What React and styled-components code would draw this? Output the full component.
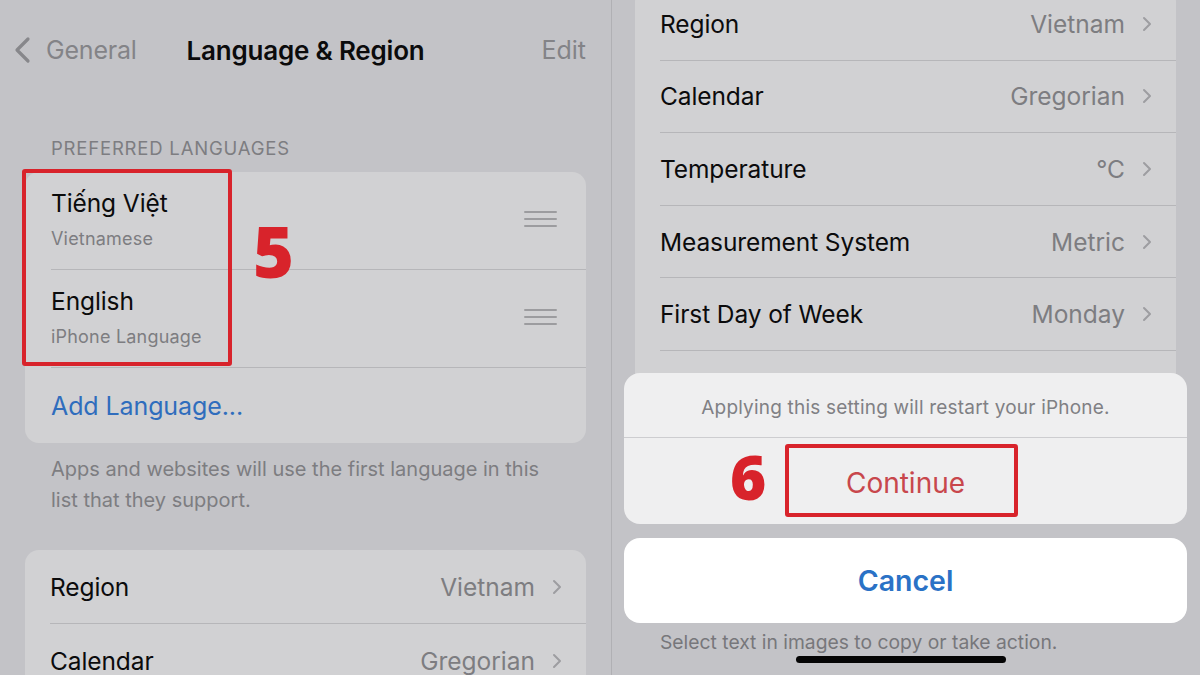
import React from "react";
import styled, { createGlobalStyle } from "styled-components";

const Global = createGlobalStyle`
  html, body { margin: 0; padding: 0; background: #c3c3c7; }
  body { font-family: Inter, "Noto Sans", Roboto, sans-serif; -webkit-font-smoothing: antialiased; }
  * { box-sizing: border-box; }
`;

const Screen = styled.div`
  width: 1200px;
  height: 675px;
  display: flex;
  overflow: hidden;
  background: #c3c3c7;
`;

const Panel = styled.div`
  position: relative;
  width: ${(p) => p.$w || "auto"};
  flex: ${(p) => (p.$w ? "none" : "1")};
  height: 100%;
  display: flex;
  flex-direction: column;
  overflow: hidden;
  border-left: ${(p) => (p.$divider ? "1px solid #b0b0b4" : "none")};
  & > * { flex-shrink: 0; }
`;

const NavBar = styled.div`
  height: 100px;
  display: grid;
  grid-template-columns: 1fr auto 1fr;
  align-items: center;
  padding: 0 25px;
`;

const BackBtn = styled.div`
  display: flex;
  align-items: center;
  gap: 13px;
  margin-left: -12px;
  color: #838387;
  font-size: 25px;
  letter-spacing: -0.2px;
`;

const Title = styled.div`
  font-size: 26px;
  font-weight: 600;
  color: #0b0b0c;
  letter-spacing: -0.2px;
`;

const NavRight = styled.div`
  justify-self: end;
  font-size: 25px;
  color: #838387;
`;

const SectionHeader = styled.div`
  padding: 37px 51px 0;
  height: 72px;
  font-size: 18.5px;
  color: #7d7d81;
  letter-spacing: 0.8px;
`;

const Card = styled.div`
  margin: ${(p) => p.$margin || "0 25px"};
  background: #d1d1d3;
  border-radius: 14px;
  overflow: hidden;
`;

const LangRow = styled.div`
  height: ${(p) => p.$h || 98}px;
  margin-left: 26px;
  padding-right: 29px;
  display: flex;
  align-items: center;
  justify-content: space-between;
  border-bottom: ${(p) => (p.$last ? "none" : "1px solid #b6b6b9")};
`;

const LangText = styled.div`
  display: flex;
  flex-direction: column;
  gap: 10px;
  margin-top: -4px;
`;

const Primary = styled.div`
  font-size: 24.5px;
  color: #0b0b0c;
  letter-spacing: -0.1px;
`;

const Secondary = styled.div`
  font-size: 18px;
  color: #7d7d81;
  letter-spacing: 0.2px;
`;

const LinkText = styled.div`
  font-size: 25px;
  color: #2f6dbd;
  letter-spacing: -0.1px;
`;

const Handle = styled.div`
  width: 33px;
  display: flex;
  flex-direction: column;
  gap: 5px;
  margin-top: -4px;
  & > span {
    display: block;
    height: 2px;
    background: #9c9c9f;
    border-radius: 1px;
  }
`;

const FooterNote = styled.div`
  padding: 11px 60px 0 51px;
  height: 107px;
  font-size: 20px;
  line-height: 31px;
  color: #7d7d81;
`;

const SettingRow = styled.div`
  height: ${(p) => p.$h}px;
  margin-left: 25px;
  padding-right: 24px;
  display: flex;
  align-items: center;
  justify-content: space-between;
  border-bottom: 1px solid #b6b6b9;
  flex: none;
`;

const Value = styled.div`
  display: flex;
  align-items: center;
  gap: 17px;
  font-size: 24.5px;
  color: #7d7d81;
`;

const Overlay = styled.div`
  position: absolute;
  left: 12px;
  right: 13px;
  top: 373px;
  display: flex;
  flex-direction: column;
  align-items: stretch;
`;

const Sheet = styled.div`
  background: #efeff0;
  border-radius: 16px;
  overflow: hidden;
`;

const SheetMessage = styled.div`
  height: 65px;
  display: flex;
  align-items: center;
  justify-content: center;
  font-size: 19px;
  letter-spacing: 0.2px;
  color: #808084;
  border-bottom: 1px solid #cdcdd0;
  padding-top: 4px;
`;

const SheetAction = styled.div`
  height: 86px;
  display: flex;
  align-items: center;
  justify-content: center;
  font-size: 28px;
  padding-top: 3px;
  color: ${(p) => p.$color};
  font-weight: ${(p) => p.$weight || 400};
`;

const CancelBtn = styled(SheetAction)`
  margin-top: 14px;
  height: 85px;
  padding-top: 0;
  background: #ffffff;
  border-radius: 16px;
  font-size: 28.5px;
`;

const Hint = styled.div`
  margin-top: 7px;
  padding-left: 36px;
  font-size: 19.3px;
  color: #77777b;
  height: 23px;
`;

const HomeBar = styled.div`
  align-self: center;
  margin-top: 3px;
  width: 210px;
  height: 7px;
  border-radius: 4px;
  background: #050505;
  transform: translateX(-5px);
`;

const RedBox = styled.div`
  position: absolute;
  left: ${(p) => p.$x}px;
  top: ${(p) => p.$y}px;
  width: ${(p) => p.$w}px;
  height: ${(p) => p.$h}px;
  border: 4px solid #d8232b;
  border-radius: 3px;
  pointer-events: none;
`;

const RedNumber = styled.div`
  position: absolute;
  left: ${(p) => p.$x}px;
  top: ${(p) => p.$y}px;
  font-family: "Open Sans", "DejaVu Sans", sans-serif;
  font-weight: 800;
  font-size: ${(p) => p.$size}px;
  line-height: 1;
  color: #d8232b;
`;

const Chevron = () => (
  <svg width="10" height="16" viewBox="0 0 10 16" fill="none">
    <path d="M2 2l6 6-6 6" stroke="#9d9da1" strokeWidth="2" strokeLinecap="round" strokeLinejoin="round" />
  </svg>
);

const BackChevron = () => (
  <svg width="20" height="28" viewBox="0 0 20 28" fill="none">
    <path d="M15 3L4 14l11 11" stroke="#87878b" strokeWidth="3.2" strokeLinecap="round" strokeLinejoin="round" />
  </svg>
);

const DragHandle = () => (
  <Handle>
    <span />
    <span />
    <span />
  </Handle>
);

const rightRows = [
  ["Region", "Vietnam"],
  ["Calendar", "Gregorian"],
  ["Temperature", "°C"],
  ["Measurement System", "Metric"],
  ["First Day of Week", "Monday"],
];

export default function App() {
  return (
    <>
      <Global />
      <Screen>
        <Panel $w="611px">
          <NavBar>
            <BackBtn>
              <BackChevron />
              General
            </BackBtn>
            <Title>Language &amp; Region</Title>
            <NavRight>Edit</NavRight>
          </NavBar>
          <SectionHeader>PREFERRED LANGUAGES</SectionHeader>
          <Card>
            <LangRow>
              <LangText>
                <Primary>Tiếng Việt</Primary>
                <Secondary>Vietnamese</Secondary>
              </LangText>
              <DragHandle />
            </LangRow>
            <LangRow>
              <LangText>
                <Primary>English</Primary>
                <Secondary>iPhone Language</Secondary>
              </LangText>
              <DragHandle />
            </LangRow>
            <LangRow $h={75} $last>
              <LinkText>Add Language...</LinkText>
            </LangRow>
          </Card>
          <FooterNote>
            Apps and websites will use the first language in this list that they support.
          </FooterNote>
          <Card>
            <SettingRow $h={74}>
              <Primary>Region</Primary>
              <Value>
                Vietnam
                <Chevron />
              </Value>
            </SettingRow>
            <SettingRow $h={74}>
              <Primary>Calendar</Primary>
              <Value>
                Gregorian
                <Chevron />
              </Value>
            </SettingRow>
          </Card>
          <RedBox $x={22} $y={169} $w={210} $h={197} />
          <RedNumber $x={253} $y={216} $size={70}>5</RedNumber>
        </Panel>
        <Panel $divider>
          <Card $margin="-12px 24px 0 23px">
            {rightRows.map(([label, value]) => (
              <SettingRow key={label} $h={72.6}>
                <Primary>{label}</Primary>
                <Value>
                  {value}
                  <Chevron />
                </Value>
              </SettingRow>
            ))}
            <SettingRow $h={72.6} />
          </Card>
          <Overlay>
            <Sheet>
              <SheetMessage>Applying this setting will restart your iPhone.</SheetMessage>
              <SheetAction $color="#c8474c">Continue</SheetAction>
            </Sheet>
            <CancelBtn $color="#2a72c6" $weight={600}>Cancel</CancelBtn>
            <Hint>Select text in images to copy or take action.</Hint>
            <HomeBar />
          </Overlay>
          <RedBox $x={173} $y={444} $w={233} $h={73} />
          <RedNumber $x={118} $y={445} $size={62}>6</RedNumber>
        </Panel>
      </Screen>
    </>
  );
}
